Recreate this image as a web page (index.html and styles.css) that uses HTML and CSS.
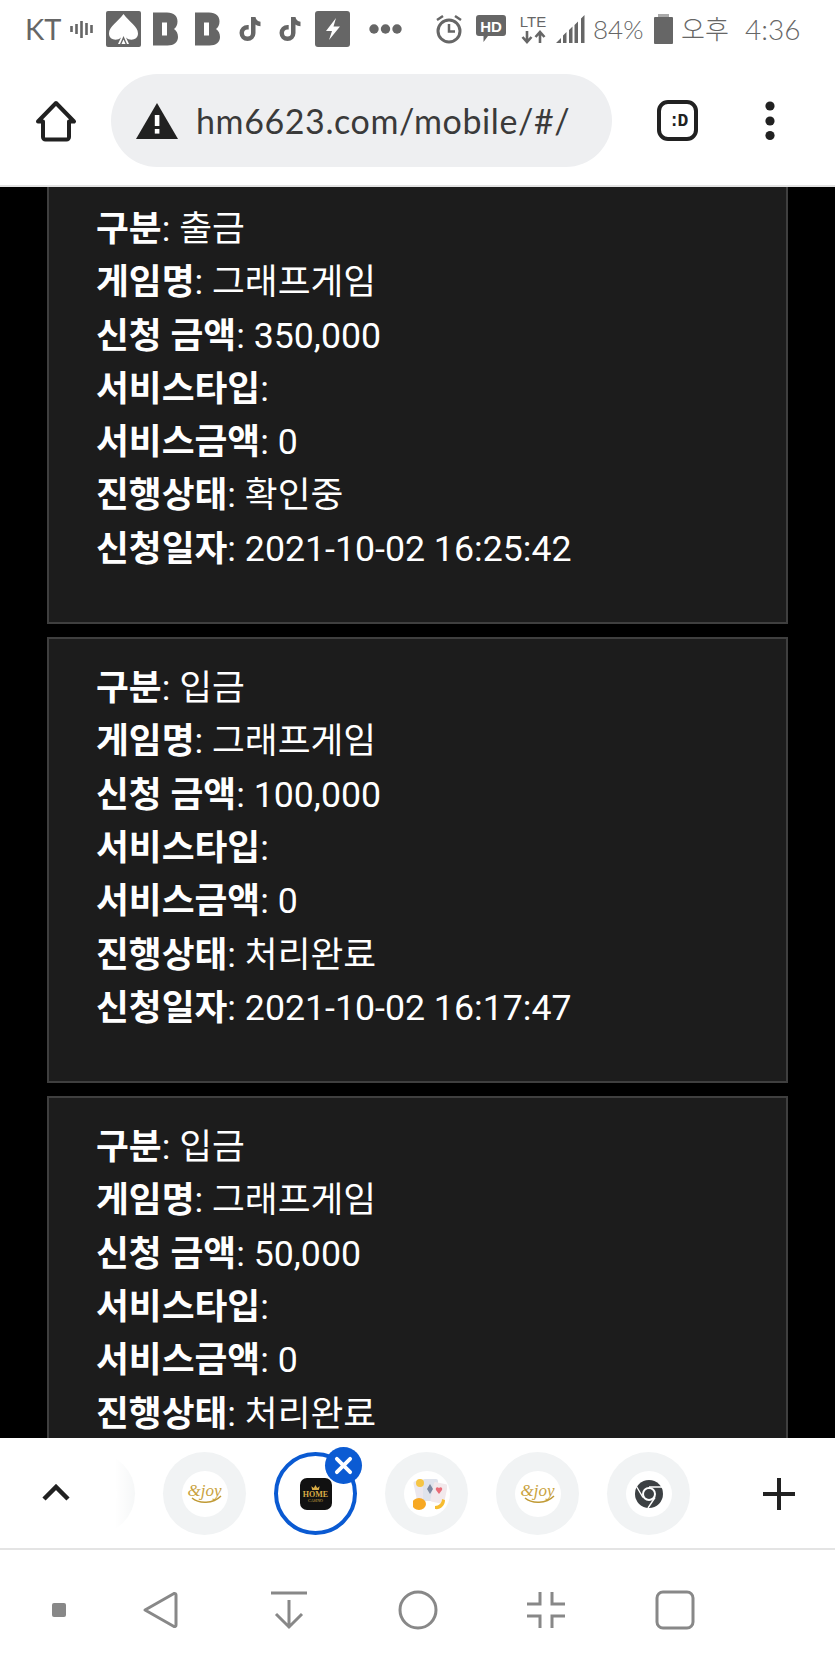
FILE: index.html
```html
<!DOCTYPE html>
<html lang="ko">
<head>
    <meta charset="UTF-8">
    <meta name="viewport" content="width=device-width, initial-scale=1.0">
    <title>hm6623.com</title>
    <link rel="stylesheet" href="styles.css">
</head>
<body>
    <div class="phone">
        <!-- Android status bar -->
        <div class="status-bar">
            <div class="status-left">
                <span class="carrier">KT</span>
                <svg class="slot-wave" viewBox="0 0 24 24"><path d="M1.500 9v6M6.500 7v10M11.500 4v17M16.500 6v12M21.500 8v8" stroke="#666" stroke-width="2.600" fill="none"/></svg>
                <svg class="slot-spade" viewBox="0 0 36 36"><rect x="1" width="35" height="36" rx="2" fill="#666"/><path d="M18.500 3C24 11 33 15 33 22.500C33 29 25 30.500 21 26.500L24 33H13L16 26.500C12 30.500 4 29 4 22.500C4 15 13 11 18.500 3Z" fill="#fff"/><path d="M18.500 25L22 33H15Z" fill="#666"/><path d="M18.500 28.500L20.500 33H16.500Z" fill="#fff"/></svg>
                <svg class="slot-b" viewBox="0 0 31 34"><path d="M1 0.500H15C22 0.500 25.500 4 25.500 9.500C25.500 13 24 15.500 22 17C24.500 18.500 26 21.500 26 25C26 30 22 33.500 15.500 33.500H1Z" fill="#666"/><rect x="10" y="10.500" width="5" height="13" fill="#fff"/></svg>
                <svg class="slot-b" viewBox="0 0 31 34"><path d="M1 0.500H15C22 0.500 25.500 4 25.500 9.500C25.500 13 24 15.500 22 17C24.500 18.500 26 21.500 26 25C26 30 22 33.500 15.500 33.500H1Z" fill="#666"/><rect x="10" y="10.500" width="5" height="13" fill="#fff"/></svg>
                <svg class="slot-tt" viewBox="0 0 31 26"><path transform="translate(2 0)" d="M13 1h4.500c.3 2.700 2.300 4.500 5 4.800v4.400c-1.900 0-3.600-.6-5-1.600v8.400a8 8 0 1 1-8-8h1.200v4.500H9.500a3.500 3.500 0 1 0 3.500 3.500Z" fill="#666"/></svg>
                <svg class="slot-tt2" viewBox="0 0 26 26"><path d="M13 1h4.500c.3 2.700 2.300 4.500 5 4.800v4.400c-1.900 0-3.600-.6-5-1.600v8.400a8 8 0 1 1-8-8h1.200v4.500H9.500a3.500 3.500 0 1 0 3.500 3.500Z" fill="#666"/></svg>
                <svg class="slot-bolt" viewBox="0 0 35 36"><rect width="35" height="36" rx="3" fill="#666"/><path d="M21 7L11 20H17L14 29L25 15.500H18.500Z" fill="#fff"/></svg>
                <svg class="slot-dots" viewBox="0 0 41 12"><circle cx="13" cy="6" r="4.700" fill="#666"/><circle cx="24.500" cy="6" r="4.700" fill="#666"/><circle cx="36" cy="6" r="4.700" fill="#666"/></svg>
            </div>
            <div class="status-right">
                <svg class="slot-alarm" viewBox="0 0 32 32"><circle cx="13" cy="18" r="11" stroke="#666" stroke-width="3" fill="none"/><path d="M13 11v7.500h6" stroke="#666" stroke-width="2.500" fill="none"/><path d="M1 7l6-4M25 7l-6-4" stroke="#666" stroke-width="2.500" fill="none"/></svg>
                <svg class="slot-hd" viewBox="0 0 35 30"><path d="M3 1H27a3 3 0 0 1 3 3V19a3 3 0 0 1-3 3H12L7.500 28V22H3a3 3 0 0 1-3-3V4A3 3 0 0 1 3 1Z" fill="#666"/><text class="hd-text" x="15" y="17.500">HD</text></svg>
                <svg class="slot-lte" viewBox="0 0 29 32"><text class="lte-text" x="14" y="14">LTE</text><path d="M8 18v10M3.500 24l4.500 5 4.500-5M21 30V20M16.500 24l4.500-5 4.500 5" stroke="#666" stroke-width="2.600" fill="none"/></svg>
                <svg class="slot-signal" viewBox="0 0 29 30"><path d="M0 29L5 24V29ZM7 21.500L10.500 18V29H7ZM13 16L16.500 12.500V29H13ZM18.500 11L22 7.500V29H18.500ZM25 4.500L28.500 1V29H25Z" fill="#666"/></svg>
                <span class="level">84%</span>
                <svg class="slot-battery" viewBox="0 0 23 30"><rect x="8" width="11" height="3" fill="#aaa"/><rect x="4" y="3" width="19" height="27" rx="1" fill="#666"/></svg>
                <span class="ampm">오후</span>
                <span class="clock">4:36</span>
            </div>
        </div>

        <!-- Browser toolbar -->
        <div class="toolbar">
            <svg class="home-icon" viewBox="0 0 42 42"><path d="M21 3L39 21.500H34V37a2.500 2.500 0 0 1-2.500 2.500h-21A2.500 2.500 0 0 1 8 37V21.500H3Z" stroke="#212121" stroke-width="4" stroke-linejoin="round" fill="none"/></svg>
            <div class="address">
                <svg class="warn-icon" viewBox="0 0 42 36"><path d="M21 0L42 36H0Z" fill="#212121"/><rect x="18.800" y="12" width="4.600" height="11" fill="#fff"/><rect x="18.800" y="26" width="4.600" height="4.600" fill="#fff"/></svg>
                <span class="url">hm6623.com/mobile/#/</span>
            </div>
            <div class="tab-count"><span>:D</span></div>
            <svg class="menu-icon" viewBox="0 0 10 40"><circle cx="5" cy="5" r="4.600" fill="#212121"/><circle cx="5" cy="20" r="4.600" fill="#212121"/><circle cx="5" cy="34.500" r="4.600" fill="#212121"/></svg>
        </div>

        <!-- Page content, scrolled -->
        <div class="page">
            <div class="record-list">
                <div class="record">
                    <div class="row"><b>구분</b>: 출금</div>
                    <div class="row"><b>게임명</b>: 그래프게임</div>
                    <div class="row"><b>신청 금액</b>: 350,000</div>
                    <div class="row"><b>서비스타입</b>:</div>
                    <div class="row"><b>서비스금액</b>: 0</div>
                    <div class="row"><b>진행상태</b>: 확인중</div>
                    <div class="row"><b>신청일자</b>: 2021-10-02 16:25:42</div>
                </div>
                <div class="record">
                    <div class="row"><b>구분</b>: 입금</div>
                    <div class="row"><b>게임명</b>: 그래프게임</div>
                    <div class="row"><b>신청 금액</b>: 100,000</div>
                    <div class="row"><b>서비스타입</b>:</div>
                    <div class="row"><b>서비스금액</b>: 0</div>
                    <div class="row"><b>진행상태</b>: 처리완료</div>
                    <div class="row"><b>신청일자</b>: 2021-10-02 16:17:47</div>
                </div>
                <div class="record">
                    <div class="row"><b>구분</b>: 입금</div>
                    <div class="row"><b>게임명</b>: 그래프게임</div>
                    <div class="row"><b>신청 금액</b>: 50,000</div>
                    <div class="row"><b>서비스타입</b>:</div>
                    <div class="row"><b>서비스금액</b>: 0</div>
                    <div class="row"><b>진행상태</b>: 처리완료</div>
                </div>
            </div>
        </div>

        <!-- Tab strip -->
        <div class="tab-strip">
            <div class="tab-list">
                <div class="tab"><div class="tab-inner"></div></div>
                <div class="tab">
                    <div class="tab-inner">
                        <span class="joy">&amp;joy</span>
                        <svg class="joy-arc" viewBox="0 0 34 10"><path d="M3 3C10 9 24 9 32 1" stroke="#c09a35" stroke-width="1.500" fill="none"/></svg>
                    </div>
                </div>
                <div class="tab active">
                    <div class="home-logo">
                        <svg class="home-crown" viewBox="0 0 10 6"><path d="M1 6L0 1.500L3 3.500L5 0L7 3.500L10 1.500L9 6Z" fill="#d9ac45"/></svg>
                        <span class="home-word">HOME</span>
                        <span class="home-sub">CASINO</span>
                    </div>
                    <div class="tab-close">
                        <svg viewBox="0 0 20 20"><path d="M3 3L17 17M17 3L3 17" stroke="#fff" stroke-width="4" stroke-linecap="round"/></svg>
                    </div>
                </div>
                <div class="tab">
                    <div class="tab-inner">
                        <svg class="cards-icon" viewBox="0 0 34 34">
                            <rect x="2" y="3" width="15" height="21" rx="2" fill="#ece8ee" transform="rotate(-12 9 13)"/>
                            <rect x="10" y="2" width="15" height="22" rx="2" fill="#dfe3ec"/>
                            <rect x="19" y="6" width="14" height="20" rx="2" fill="#f2e9ec" transform="rotate(12 26 16)"/>
                            <path d="M17 7l3 5-3 5-3-5Z" fill="#7b88a0"/>
                            <path d="M26 11c2-2 4 0 3 2l-3 4-3-4c-1-2 1-4 3-2Z" fill="#ea6a76"/>
                            <circle cx="7" cy="6" r="4" fill="#f6c544"/>
                            <ellipse cx="6" cy="27" rx="7" ry="6" fill="#f7a823"/>
                            <path d="M22 32c5 1 10-3 10-9l-3-1c0 4-3 7-7 7Z" fill="#f6bc2f"/>
                        </svg>
                    </div>
                </div>
                <div class="tab">
                    <div class="tab-inner">
                        <span class="joy">&amp;joy</span>
                        <svg class="joy-arc" viewBox="0 0 34 10"><path d="M3 3C10 9 24 9 32 1" stroke="#c09a35" stroke-width="1.500" fill="none"/></svg>
                    </div>
                </div>
                <div class="tab">
                    <div class="tab-inner">
                        <svg class="chrome-icon" viewBox="0 0 28 28">
                            <circle cx="14" cy="14" r="14" fill="#3c4043"/>
                            <circle cx="14" cy="14" r="7" fill="#fff"/>
                            <circle cx="14" cy="14" r="5" fill="#3c4043"/>
                            <path d="M14 7H27.500M8 17.500L1.500 6.500M20 17.500L13 28" stroke="#fff" stroke-width="1.400" fill="none"/>
                        </svg>
                    </div>
                </div>
            </div>
            <div class="tab-fade"></div>
            <svg class="chevron-icon" viewBox="0 0 28 18"><path d="M2 15L14 3L26 15" stroke="#212121" stroke-width="4.500" fill="none"/></svg>
            <svg class="plus-icon" viewBox="0 0 32 32"><path d="M16 0V32M0 16H32" stroke="#212121" stroke-width="4"/></svg>
        </div>

        <!-- Navigation bar -->
        <div class="nav-bar">
            <div class="nav-dot"></div>
            <svg class="nav-icon" viewBox="0 0 40 40"><path d="M4 20L33 3.500a1.500 1.500 0 0 1 2 1.500V35a1.500 1.500 0 0 1-2 1.500Z" stroke="#888" stroke-width="3" stroke-linejoin="round" fill="none"/></svg>
            <svg class="nav-icon" viewBox="0 0 40 40"><path d="M2 3H38M20 10V37M7 24L20 37L33 24" stroke="#888" stroke-width="3" fill="none"/></svg>
            <svg class="nav-icon" viewBox="0 0 40 40"><circle cx="20" cy="20" r="18" stroke="#888" stroke-width="3" fill="none"/></svg>
            <svg class="nav-icon" viewBox="0 0 40 40"><path d="M14 2V14H1M26 2V14H39M14 38V26H1M26 38V26H39" stroke="#888" stroke-width="3" fill="none"/></svg>
            <svg class="nav-icon" viewBox="0 0 40 40"><rect x="2" y="2" width="36" height="36" rx="6" stroke="#888" stroke-width="3" fill="none"/></svg>
        </div>
    </div>
</body>
</html>
```

FILE: styles.css
```css
* {
    box-sizing: border-box;
}

html, body {
    margin: 0;
    padding: 0;
}

body {
    font-family: Roboto, "Noto Sans CJK KR", sans-serif;
    background: #fff;
}

.phone {
    width: 835px;
    height: 1670px;
    display: flex;
    flex-direction: column;
    overflow: hidden;
}

/* status bar */
.status-bar {
    height: 60px;
    flex: none;
    display: flex;
    justify-content: space-between;
    align-items: center;
    padding: 0 35px 3px 25px;
    color: #666;
    font-family: Lato, "Noto Sans CJK KR", sans-serif;
}

.status-left {
    display: flex;
    align-items: center;
    gap: 11px;
}

.status-right {
    display: flex;
    align-items: center;
    gap: 8px;
}

.carrier {
    width: 34px;
    font-size: 29px;
    line-height: 36px;
}

.slot-wave { width: 24px; height: 24px; }
.slot-spade { width: 36px; height: 36px; }
.slot-b { width: 31px; height: 34px; }
.slot-tt { width: 31px; height: 26px; }
.slot-tt2 { width: 26px; height: 26px; }
.slot-bolt { width: 35px; height: 36px; }
.slot-dots { width: 41px; height: 12px; }
.slot-alarm { width: 32px; height: 32px; }
.slot-hd { width: 35px; height: 30px; }
.slot-lte { width: 29px; height: 32px; }
.slot-signal { width: 29px; height: 30px; }
.slot-battery { width: 23px; height: 30px; }

.hd-text {
    font-family: "Liberation Sans", sans-serif;
    font-size: 15px;
    font-weight: 700;
    fill: #fff;
    text-anchor: middle;
}

.lte-text {
    font-family: "Liberation Sans", sans-serif;
    font-size: 15px;
    fill: #666;
    text-anchor: middle;
}

.level {
    width: 49px;
    font-size: 26px;
    line-height: 36px;
    font-weight: 300;
    white-space: nowrap;
}

.ampm {
    width: 52px;
    font-size: 26px;
    line-height: 36px;
    font-weight: 300;
    white-space: nowrap;
}

.clock {
    width: 59px;
    padding-left: 4px;
    font-size: 28px;
    line-height: 36px;
    font-weight: 300;
    white-space: nowrap;
}

/* browser toolbar */
.toolbar {
    height: 127px;
    flex: none;
    display: flex;
    align-items: center;
    padding: 0 0 4px 35px;
    border-bottom: 2px solid #e2e2e2;
}

.home-icon {
    width: 42px;
    height: 42px;
    flex: none;
}

.address {
    width: 501px;
    height: 93px;
    margin-left: 34px;
    padding-left: 25px;
    display: flex;
    align-items: center;
    background: #eeeff1;
    border-radius: 47px;
}

.warn-icon {
    width: 42px;
    height: 36px;
    flex: none;
}

.url {
    margin-left: 18px;
    font-family: Lato, sans-serif;
    font-size: 34px;
    letter-spacing: 0.6px;
    color: #3a3a3a;
    white-space: nowrap;
}

.tab-count {
    width: 41px;
    height: 41px;
    margin-left: 45px;
    display: flex;
    align-items: center;
    justify-content: center;
    border: 4px solid #212121;
    border-radius: 11px;
}

.tab-count span {
    font-family: "Liberation Mono", monospace;
    font-size: 18px;
    font-weight: 700;
    letter-spacing: -2px;
    color: #212121;
}

.menu-icon {
    width: 10px;
    height: 40px;
    margin-left: 67px;
    flex: none;
}

/* page content */
.page {
    flex: 1;
    min-height: 0;
    overflow: hidden;
    background: #000;
}

.record-list {
    margin: -9px 0 0 47px;
    width: 741px;
    display: flex;
    flex-direction: column;
    gap: 13px;
}

.record {
    padding: 23px 20px 46px 47px;
    background: #1c1c1c;
    border: 2px solid #3f3f3f;
    color: #fff;
}

.row {
    font-size: 35.7px;
    line-height: 53.3px;
    white-space: nowrap;
}

.row b {
    font-weight: 700;
}

/* tab strip */
.tab-strip {
    position: relative;
    height: 112px;
    flex: none;
    border-bottom: 2px solid #e4e4e4;
    background: #fff;
}

.tab-list {
    display: flex;
    gap: 28px;
    padding: 14px 0 0 52px;
}

.tab {
    position: relative;
    width: 83px;
    height: 83px;
    flex: none;
    display: flex;
    align-items: center;
    justify-content: center;
    background: #f1f3f4;
    border-radius: 50%;
}

.tab-inner {
    position: relative;
    width: 46px;
    height: 46px;
    display: flex;
    align-items: center;
    justify-content: center;
    background: #fff;
    border-radius: 50%;
}

.tab.active {
    background: #fff;
    border: 4px solid #0a5ad2;
}

.tab-close {
    position: absolute;
    top: -9.5px;
    right: -8.5px;
    width: 37px;
    height: 37px;
    display: flex;
    align-items: center;
    justify-content: center;
    background: #0b5bd3;
    border-radius: 50%;
}

.tab-close svg {
    width: 19px;
    height: 19px;
}

.joy {
    margin-top: -6px;
    font-family: "Liberation Serif", serif;
    font-size: 17px;
    font-style: italic;
    color: #c9a23e;
    white-space: nowrap;
}

.joy-arc {
    position: absolute;
    left: 7px;
    top: 24px;
    width: 34px;
    height: 10px;
}

.home-logo {
    width: 32px;
    height: 32px;
    display: flex;
    flex-direction: column;
    align-items: center;
    justify-content: center;
    background: #111;
    border-radius: 7px;
    color: #d9ac45;
    font-family: "Liberation Serif", serif;
    line-height: 1;
}

.home-crown {
    width: 9px;
    height: 5px;
    margin-bottom: 1px;
}

.home-word {
    font-size: 8px;
    font-weight: 700;
}

.home-sub {
    font-size: 4px;
}

.cards-icon {
    width: 34px;
    height: 34px;
    margin-left: 6px;
}

.chrome-icon {
    width: 28px;
    height: 28px;
}

.tab-fade {
    position: absolute;
    left: 0;
    top: 0;
    bottom: 0;
    width: 135px;
    background: linear-gradient(to right, #fff 85%, rgba(255, 255, 255, 0.35));
}

.chevron-icon {
    position: absolute;
    left: 42px;
    top: 46px;
    width: 28px;
    height: 18px;
}

.plus-icon {
    position: absolute;
    left: 763px;
    top: 40px;
    width: 32px;
    height: 32px;
}

/* navigation bar */
.nav-bar {
    height: 120px;
    flex: none;
    display: flex;
    align-items: center;
    gap: 88.5px;
    padding: 0 0 0 52px;
}

.nav-dot {
    width: 14px;
    height: 14px;
    margin-right: -14px;
    flex: none;
    background: #888;
    border-radius: 2px;
}

.nav-icon {
    width: 40px;
    height: 40px;
    flex: none;
}
```
